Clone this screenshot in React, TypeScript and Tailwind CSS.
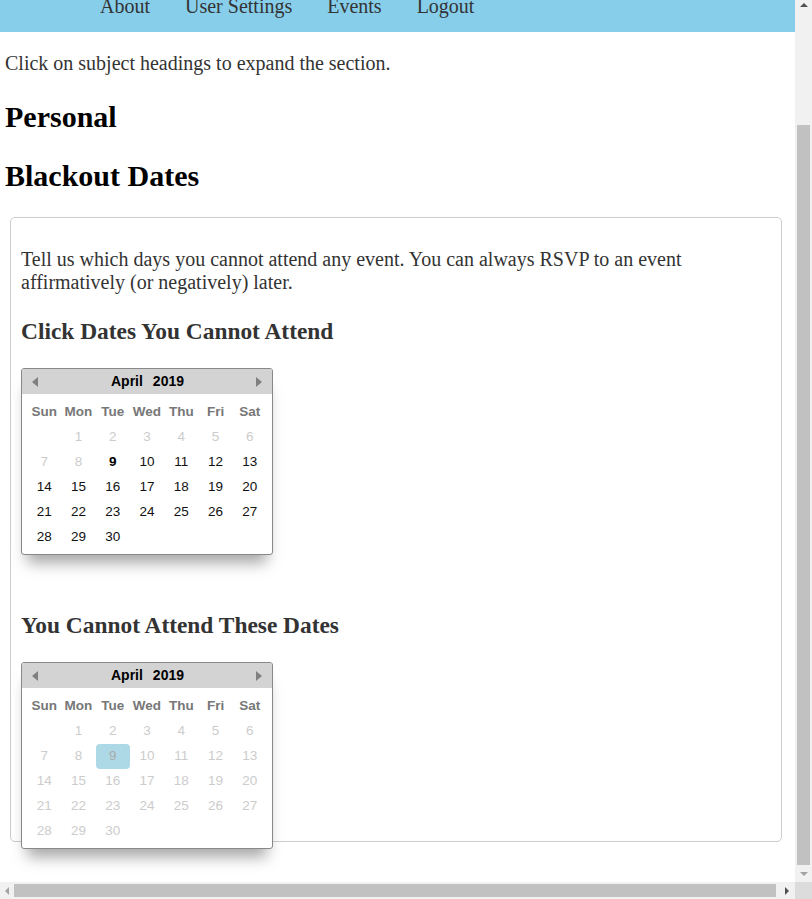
import React from "react";

type Day = number | null;

const weeks: Day[][] = [
  [null, 1, 2, 3, 4, 5, 6],
  [7, 8, 9, 10, 11, 12, 13],
  [14, 15, 16, 17, 18, 19, 20],
  [21, 22, 23, 24, 25, 26, 27],
  [28, 29, 30, null, null, null, null],
];

const dayNames = ["Sun", "Mon", "Tue", "Wed", "Thu", "Fri", "Sat"];

function Arrow({ dir }: { dir: "left" | "right" }) {
  return (
    <svg width="6" height="10" viewBox="0 0 6 10" className="shrink-0">
      {dir === "left" ? (
        <polygon points="6,0 6,10 0,5" fill="#808080" />
      ) : (
        <polygon points="0,0 0,10 6,5" fill="#808080" />
      )}
    </svg>
  );
}

function Calendar({ readOnly, className }: { readOnly?: boolean; className?: string }) {
  const cellColor = (d: number) => {
    if (readOnly) return d === 9 ? "text-[#aaaaaa] bg-[#add8e6] rounded-[4px]" : "text-[#cccccc]";
    if (d < 9) return "text-[#cccccc]";
    if (d === 9) return "text-black font-bold";
    return "text-[#111111]";
  };

  return (
    <div
      className={`self-start w-[252px] border border-[#888888] rounded-[3px] bg-white overflow-hidden shadow-[0_14px_14px_-6px_rgba(0,0,0,0.35)] font-['Liberation_Sans',Arial,sans-serif] text-[13.5px] ${className ?? ""}`}
    >
      <div className="h-[25px] bg-[#d3d3d3] flex items-center justify-between px-[10px]">
        <Arrow dir="left" />
        <div className="font-bold text-black text-[14px] flex gap-[10px] pl-[1px]">
          <span>April</span>
          <span>2019</span>
        </div>
        <Arrow dir="right" />
      </div>
      <div className="pt-[6px] pb-[4px] px-[5px]">
        <div className="grid grid-cols-7">
          {dayNames.map((n) => (
            <div key={n} className="h-[25px] flex items-center justify-center font-bold text-[#777777]">
              {n}
            </div>
          ))}
        </div>
        {weeks.map((w, i) => (
          <div key={i} className="grid grid-cols-7">
            {w.map((d, j) => (
              <div
                key={j}
                className={`h-[25px] flex items-center justify-center ${d ? cellColor(d) : ""}`}
              >
                {d ?? ""}
              </div>
            ))}
          </div>
        ))}
      </div>
    </div>
  );
}

function Nav() {
  return (
    <nav className="h-[32px] shrink-0 bg-[#87ceeb] overflow-hidden">
      <div className="-mt-[5px] pl-[100px] flex gap-[35px] text-[20px] leading-[23px] text-[#333333]">
        <a>About</a>
        <a>User Settings</a>
        <a>Events</a>
        <a>Logout</a>
      </div>
    </nav>
  );
}

function VerticalScrollbar() {
  return (
    <div className="w-[17px] h-[882px] bg-[#f1f1f1] flex flex-col shrink-0">
      <div className="h-[17px] flex items-start justify-center pt-[3px]">
        <svg width="8" height="4" viewBox="0 0 8 4">
          <polygon points="0,4 8,4 4,0" fill="#505050" />
        </svg>
      </div>
      <div className="h-[108px]" />
      <div className="h-[740px] mx-[2px] bg-[#c1c1c1]" />
      <div className="h-[17px] flex items-center justify-center">
        <svg width="8" height="4" viewBox="0 0 8 4">
          <polygon points="0,0 8,0 4,4" fill="#a3a3a3" />
        </svg>
      </div>
    </div>
  );
}

function HorizontalScrollbar() {
  return (
    <div className="h-[17px] flex shrink-0">
      <div className="w-[795px] bg-[#f1f1f1] flex items-center">
        <div className="w-[14px] flex justify-center">
          <svg width="4" height="8" viewBox="0 0 4 8">
            <polygon points="4,0 4,8 0,4" fill="#a3a3a3" />
          </svg>
        </div>
        <div className="w-[762px] h-[13px] bg-[#c1c1c1]" />
        <div className="w-[19px] flex justify-center pl-[2px]">
          <svg width="4" height="8" viewBox="0 0 4 8">
            <polygon points="0,0 0,8 4,4" fill="#505050" />
          </svg>
        </div>
      </div>
      <div className="w-[17px] bg-[#dcdcdc]" />
    </div>
  );
}

export default function App() {
  return (
    <div className="w-[812px] h-[899px] overflow-hidden flex flex-col bg-white font-['Liberation_Serif','Times_New_Roman',serif]">
      <div className="flex h-[882px]">
        <main className="w-[795px] h-[882px] overflow-hidden flex flex-col">
          <Nav />
          <div className="px-[5px] flex flex-col">
            <p className="mt-[20px] text-[20px] leading-[23px] text-[#333333]">
              Click on subject headings to expand the section.
            </p>
            <h2 className="mt-[25px] text-[30px] leading-[34px] font-bold text-black">Personal</h2>
            <h2 className="mt-[25px] text-[30px] leading-[34px] font-bold text-black">Blackout Dates</h2>
            <section className="mt-[24px] ml-[5px] w-[772px] border border-[#cccccc] rounded-[5px] p-[10px] flex flex-col">
              <p className="mt-[20px] text-[20px] leading-[23px] text-[#333333]">
                Tell us which days you cannot attend any event. You can always RSVP to an event
                affirmatively (or negatively) later.
              </p>
              <h3 className="mt-[24px] text-[23.4px] leading-[27px] font-bold text-[#333333]">
                Click Dates You Cannot Attend
              </h3>
              <Calendar className="mt-[23px]" />
              <h3 className="mt-[57px] text-[23.4px] leading-[27px] font-bold text-[#333333]">
                You Cannot Attend These Dates
              </h3>
              <Calendar readOnly className="mt-[23px] -mb-[18px] relative" />
            </section>
          </div>
        </main>
        <VerticalScrollbar />
      </div>
      <HorizontalScrollbar />
    </div>
  );
}
